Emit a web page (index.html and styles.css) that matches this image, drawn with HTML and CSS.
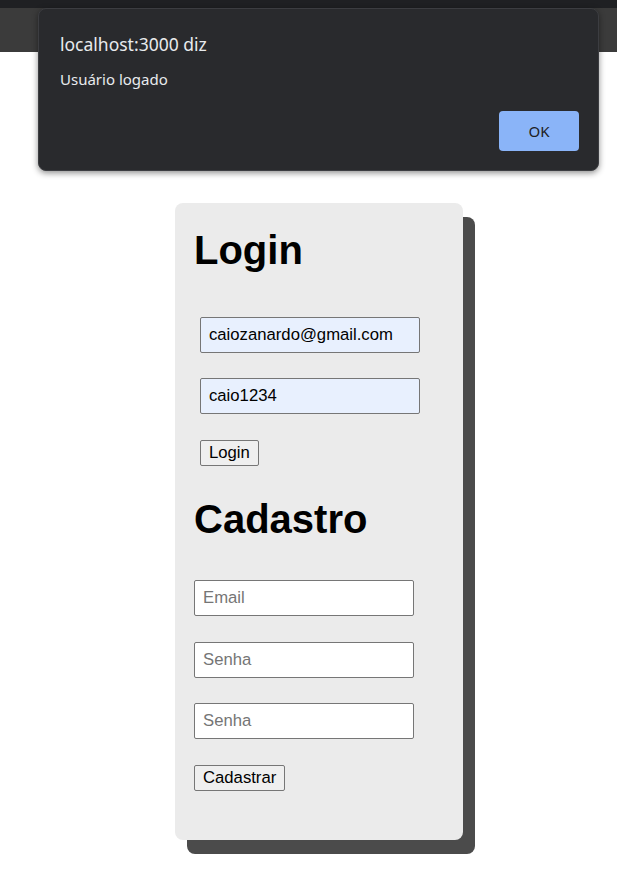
FILE: index.html
```html
<!DOCTYPE html>
<html lang="pt-BR">
<head>
<meta charset="utf-8">
<title>Login</title>
<link rel="stylesheet" href="styles.css">
</head>
<body>
<div class="topbar"></div>
<main class="page">
  <section class="card">
    <h1 class="title">Login</h1>
    <form class="form form-login">
      <input class="field field-filled" type="email" value="caiozanardo@gmail.com">
      <input class="field field-filled" type="text" value="caio1234">
      <button class="btn" type="button">Login</button>
    </form>
    <h1 class="title title-second">Cadastro</h1>
    <form class="form form-signup">
      <input class="field" type="email" placeholder="Email">
      <input class="field" type="password" placeholder="Senha">
      <input class="field" type="password" placeholder="Senha">
      <button class="btn" type="button">Cadastrar</button>
    </form>
  </section>
</main>
<div class="dialog" role="alertdialog">
  <div class="dialog-title">localhost:3000 diz</div>
  <div class="dialog-msg">Usuário logado</div>
  <div class="dialog-actions">
    <button class="dialog-ok" type="button">OK</button>
  </div>
</div>
</body>
</html>
```
FILE: styles.css
```css
html, body {
  margin: 0;
  padding: 0;
  background: #ffffff;
}
body {
  font-family: "Liberation Sans", Arial, sans-serif;
  width: 617px;
  height: 872px;
  overflow: hidden;
}
.topbar {
  height: 44px;
  background: #3b3b3b;
  border-top: 8px solid #1f2023;
}
.page {
  display: flex;
  padding-top: 151px;
  padding-left: 175px;
}
.card {
  width: 288px;
  height: 637px;
  box-sizing: border-box;
  padding: 0 19px;
  background: #ebebeb;
  border-radius: 8px;
  box-shadow: 12px 14px 0 #4b4b4b;
}
.title {
  margin: 24px 0 0;
  font-size: 40px;
  line-height: 46px;
  font-weight: bold;
  color: #000;
}
.title-second {
  margin-top: 30px;
}
.form {
  display: flex;
  flex-direction: column;
  align-items: flex-start;
}
.form-login {
  margin-top: 44px;
  padding-left: 6px;
}
.form-signup {
  margin-top: 38px;
}
.field {
  box-sizing: border-box;
  width: 220px;
  height: 36px;
  margin: 0 0 25px;
  padding: 0 8px;
  border: 1px solid #767676;
  border-radius: 2px;
  background: #ffffff;
  font-family: "Liberation Sans", Arial, sans-serif;
  font-size: 16.7px;
  color: #000;
  outline: none;
}
.field::placeholder {
  color: #757575;
}
.field-filled {
  background: #e8f0fe;
}
.form-signup .field:first-child {
  margin-bottom: 26px;
}
.field:nth-last-of-type(1) {
  margin-bottom: 26px;
}
.btn {
  box-sizing: border-box;
  height: 26px;
  padding: 0 8px;
  border: 1px solid #767676;
  border-radius: 2px;
  background: #efefef;
  font-family: "Liberation Sans", Arial, sans-serif;
  font-size: 16.7px;
  line-height: 24px;
  color: #000;
}
.dialog {
  position: absolute;
  left: 38px;
  top: 8px;
  width: 561px;
  height: 163px;
  box-sizing: border-box;
  padding: 24px 19px 19px 21px;
  background: #292a2d;
  border: 1px solid #3c3d41;
  border-radius: 8px;
  box-shadow: 0 2px 6px rgba(0, 0, 0, 0.45);
  display: flex;
  flex-direction: column;
  font-family: "Noto Sans", "Open Sans", sans-serif;
  color: #e8eaed;
}
.dialog-title {
  font-size: 17.5px;
  line-height: 22px;
}
.dialog-msg {
  margin-top: 14px;
  font-size: 15px;
  line-height: 20px;
}
.dialog-actions {
  margin-top: auto;
  display: flex;
  justify-content: flex-end;
}
.dialog-ok {
  width: 80px;
  height: 40px;
  border: none;
  border-radius: 4px;
  background: #8ab4f8;
  color: #202124;
  font-family: "Noto Sans", "Open Sans", sans-serif;
  font-size: 15px;
}
```
